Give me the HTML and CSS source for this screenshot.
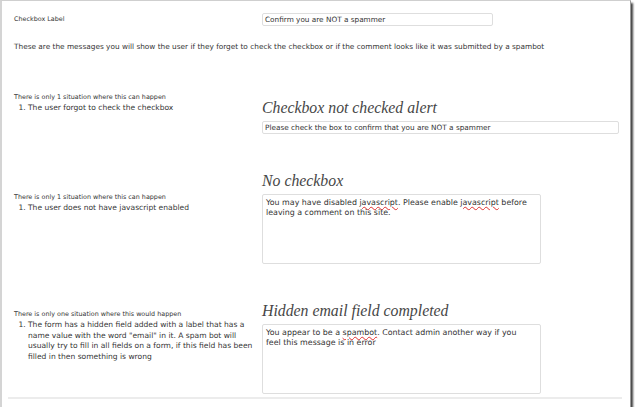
FILE: index.html
```html
<!DOCTYPE html>
<html lang="en">
<head>
  <meta charset="UTF-8">
  <title>Spam Checkbox Settings</title>
  <link rel="stylesheet" href="styles.css">
</head>
<body>
  <!-- Screenshot frame -->
  <div class="screen">
    <div class="settings">

      <!-- Checkbox label -->
      <div class="row row-label">
        <div class="label">Checkbox Label</div>
        <div class="field">
          <div class="input input-short">Confirm you are NOT a spammer</div>
        </div>
      </div>

      <p class="intro">These are the messages you will show the user if they forget to check the checkbox or if the comment looks like it was submitted by a spambot</p>

      <!-- Message 1 -->
      <div class="row msg msg-alert">
        <div class="note">
          <p class="small">There is only 1 situation where this can happen</p>
          <ol>
            <li>The user forgot to check the checkbox</li>
          </ol>
        </div>
        <div class="field">
          <h2>Checkbox not checked alert</h2>
          <div class="input input-wide">Please check the box to confirm that you are NOT a spammer</div>
        </div>
      </div>

      <!-- Message 2 -->
      <div class="row msg msg-nojs">
        <div class="note">
          <p class="small">There is only 1 situation where this can happen</p>
          <ol>
            <li>The user does not have javascript enabled</li>
          </ol>
        </div>
        <div class="field">
          <h2>No checkbox</h2>
          <div class="textarea">You may have disabled <span class="typo">javascript</span>. Please enable <span class="typo">javascript</span> before leaving a comment on this site.</div>
        </div>
      </div>

      <!-- Message 3 -->
      <div class="row msg msg-email">
        <div class="note">
          <p class="small">There is only one situation where this would happen</p>
          <ol>
            <li>The form has a hidden field added with a label that has a name value with the word "email" in it. A spam bot will usually try to fill in all fields on a form, if this field has been filled in then something is wrong</li>
          </ol>
        </div>
        <div class="field">
          <h2>Hidden email field completed</h2>
          <div class="textarea">You appear to be a <span class="typo">spambot</span>. Contact admin another way if you feel this message is in error</div>
        </div>
      </div>

    </div>
    <div class="rule"></div>
  </div>
</body>
</html>
```

FILE: styles.css
```css
* {
  margin: 0;
  padding: 0;
  box-sizing: border-box;
}

body {
  background-color: #ffffff;
  font-family: 'DejaVu Sans', Verdana, sans-serif;
  font-size: 7.3px;
  line-height: 10.5px;
  color: #333333;
}

/* Frame with drop shadow */
.screen {
  width: 631px;
  height: 407px;
  border-top: 1px solid #cfcfcf;
  border-left: 2px solid #d4d4d4;
  border-right: 1px solid #9a9a9a;
  box-shadow: 2px 3px 2px rgba(0, 0, 0, 0.75);
  background-color: #ffffff;
  display: flex;
  flex-direction: column;
}

.settings {
  padding: 12px 0 0 12px;
  flex: 1;
}

.row {
  display: grid;
  grid-template-columns: 248px 1fr;
  align-items: start;
}

.label {
  font-size: 6.4px;
  line-height: 10px;
  padding-top: 0.5px;
}

.input {
  height: 13px;
  border: 1px solid #dedede;
  border-radius: 2px;
  padding: 0 2px;
  line-height: 11px;
  white-space: nowrap;
}

.input-short {
  width: 231px;
}

.input-wide {
  width: 357px;
}

.textarea {
  width: 279px;
  height: 70px;
  border: 1px solid #dedede;
  border-radius: 2px;
  padding: 3px 10.5px 3px 3px;
  font-size: 7.9px;
  line-height: 10px;
}

.typo {
  text-decoration: underline wavy #e0302f;
  text-decoration-thickness: 1px;
  text-underline-offset: 0.5px;
}

.intro {
  margin-top: 16px;
  font-size: 7.35px;
}

/* Message rows */
.msg h2 {
  font-family: 'Liberation Serif', Georgia, serif;
  font-style: italic;
  font-weight: normal;
  font-size: 15.8px;
  line-height: 18px;
  color: #464646;
  margin-bottom: 4px;
}

.small {
  font-size: 6.4px;
  line-height: 10px;
  margin-bottom: 1px;
}

.note ol {
  font-size: 7.55px;
  padding-left: 14px;
  padding-right: 8px;
}

.msg-alert {
  margin-top: 39px;
}

.msg-alert .field {
  padding-top: 7px;
}

.msg-nojs {
  margin-top: 38px;
}

.msg-nojs .note {
  padding-top: 20px;
}

.msg-email {
  margin-top: 38.5px;
}

.msg-email .note {
  padding-top: 7px;
}

.rule {
  height: 2px;
  background-color: #ececec;
  margin: 0 8px 8px 6px;
}
```
